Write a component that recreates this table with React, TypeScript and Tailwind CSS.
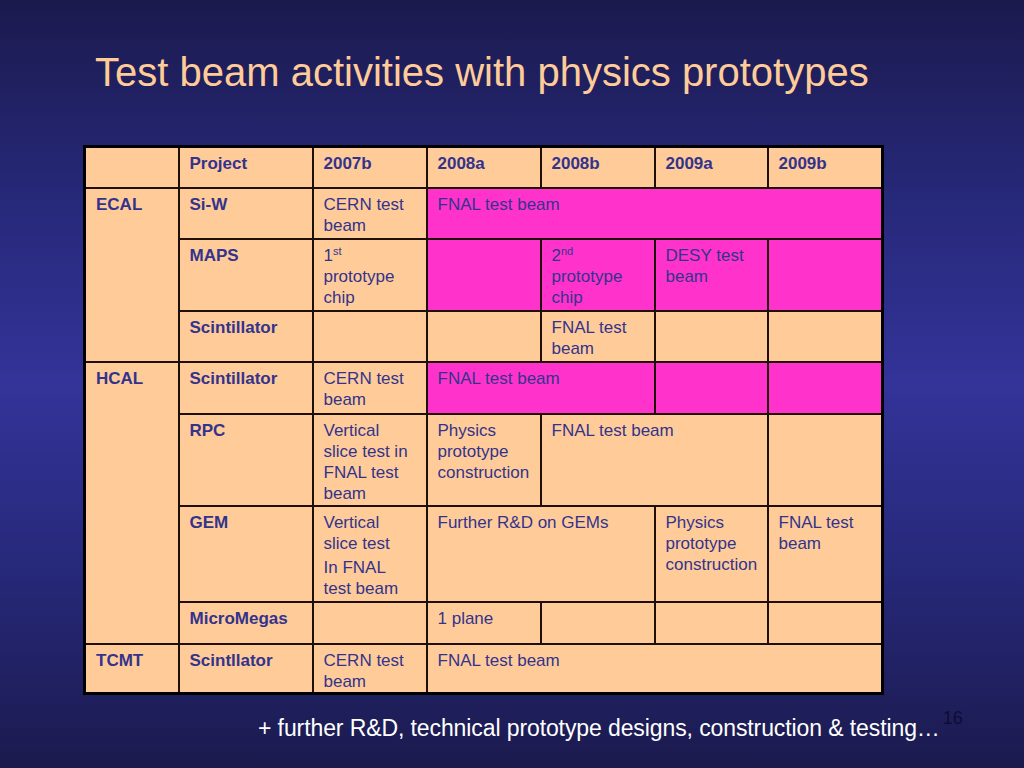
import type { ReactNode } from 'react'

const PEACH = 'bg-[#ffcc99]'
const PINK = 'bg-[#ff33cc]'

type CellProps = {
  children?: ReactNode
  pink?: boolean
  bold?: boolean
  colSpan?: number
  rowSpan?: number
}

function Cell({ children, pink, bold, colSpan, rowSpan }: CellProps) {
  return (
    <td
      colSpan={colSpan}
      rowSpan={rowSpan}
      className={`border-2 border-[#1e1008] align-top pl-[10px] pr-[9px] pt-[5px] text-[17px] leading-[21px] text-[#33338c] ${
        pink ? PINK : PEACH
      } ${bold ? 'font-bold' : 'font-normal'}`}
    >
      {children}
    </td>
  )
}

export default function App() {
  return (
    <div
      className="w-[1024px] h-[768px] overflow-hidden bg-[linear-gradient(180deg,#1b1a4e_0%,#262878_25%,#333399_50%,#262878_75%,#1b1a4e_100%)]"
      style={{ fontFamily: '"Liberation Sans", Arial, sans-serif' }}
    >
      <h1 className="pl-[95px] pt-[48px] text-[40px] leading-[48px] text-[#ffcc99] font-normal">
        Test beam activities with physics prototypes
      </h1>

      <div className="pl-[83px] pt-[49px]">
        <table className="table-fixed border-collapse border-[3px] border-black w-[798px]">
          <colgroup>
            <col className="w-[94px]" />
            <col className="w-[134px]" />
            <col className="w-[114px]" />
            <col className="w-[114px]" />
            <col className="w-[114px]" />
            <col className="w-[113px]" />
            <col className="w-[115px]" />
          </colgroup>
          <tbody>
            <tr className="h-[41px]">
              <Cell />
              <Cell bold>Project</Cell>
              <Cell bold>2007b</Cell>
              <Cell bold>2008a</Cell>
              <Cell bold>2008b</Cell>
              <Cell bold>2009a</Cell>
              <Cell bold>2009b</Cell>
            </tr>
            <tr className="h-[51px]">
              <Cell bold rowSpan={3}>ECAL</Cell>
              <Cell bold>Si-W</Cell>
              <Cell>CERN test beam</Cell>
              <Cell pink colSpan={4}>FNAL test beam</Cell>
            </tr>
            <tr className="h-[72px]">
              <Cell bold>MAPS</Cell>
              <Cell>
                1<sup className="text-[11px]">st</sup>
                <br />
                prototype chip
              </Cell>
              <Cell pink />
              <Cell pink>
                2<sup className="text-[11px]">nd</sup>
                <br />
                prototype chip
              </Cell>
              <Cell pink>DESY test beam</Cell>
              <Cell pink />
            </tr>
            <tr className="h-[51px]">
              <Cell bold>Scintillator</Cell>
              <Cell />
              <Cell />
              <Cell>FNAL test beam</Cell>
              <Cell />
              <Cell />
            </tr>
            <tr className="h-[52px]">
              <Cell bold rowSpan={4}>HCAL</Cell>
              <Cell bold>Scintillator</Cell>
              <Cell>CERN test beam</Cell>
              <Cell pink colSpan={2}>FNAL test beam</Cell>
              <Cell pink />
              <Cell pink />
            </tr>
            <tr className="h-[92px]">
              <Cell bold>RPC</Cell>
              <Cell>Vertical slice test in FNAL test beam</Cell>
              <Cell>Physics prototype construction</Cell>
              <Cell colSpan={2}>FNAL test beam</Cell>
              <Cell />
            </tr>
            <tr className="h-[96px]">
              <Cell bold>GEM</Cell>
              <Cell>
                <div>Vertical slice test</div>
                <div className="mt-[3px]">In FNAL test beam</div>
              </Cell>
              <Cell colSpan={2}>Further R&amp;D on GEMs</Cell>
              <Cell>Physics prototype construction</Cell>
              <Cell>FNAL test beam</Cell>
            </tr>
            <tr className="h-[42px]">
              <Cell bold>MicroMegas</Cell>
              <Cell />
              <Cell>1 plane</Cell>
              <Cell />
              <Cell />
              <Cell />
            </tr>
            <tr className="h-[50px]">
              <Cell bold>TCMT</Cell>
              <Cell bold>Scintllator</Cell>
              <Cell>CERN test beam</Cell>
              <Cell colSpan={4}>FNAL test beam</Cell>
            </tr>
          </tbody>
        </table>
      </div>

      <div className="flex items-start pl-[258px] pt-[20px]">
        <p className="text-[23px] leading-[26px] text-white tracking-[-0.1px]">
          + further R&amp;D, technical prototype designs, construction &amp; testing…
        </p>
        <span className="ml-[3px] -mt-[6px] text-[18px] leading-[18px] text-[#0d0d33]">16</span>
      </div>
    </div>
  )
}
